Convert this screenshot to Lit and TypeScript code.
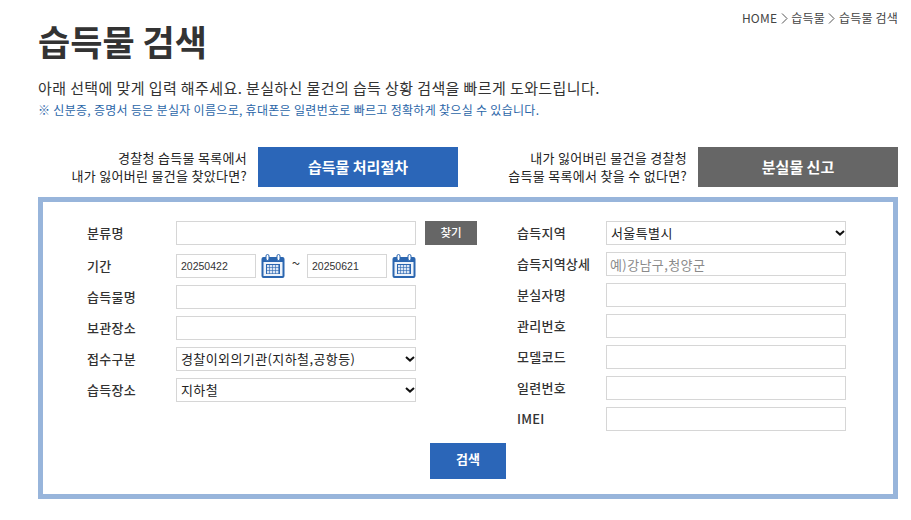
import { LitElement, html, css, svg } from "lit";
import { customElement } from "lit/decorators.js";

const chevron = html`<svg class="chev" viewBox="0 0 7 11" width="7" height="11"><path d="M1 .5 6 5.5 1 10.5" fill="none" stroke="#555" stroke-width="1"/></svg>`;

const calendar = html`<svg class="cal" viewBox="0 0 24 24" width="24" height="24">
  <path d="M2.5 3h19a2 2 0 0 1 2 2v17a2 2 0 0 1-2 2h-19a2 2 0 0 1-2-2V5a2 2 0 0 1 2-2z" fill="#2b66b0"/>
  <rect x="2.5" y="8" width="19" height="14" fill="#eef3fa"/>
  <rect x="5" y="0.5" width="3" height="6" rx="1.5" fill="#fff" stroke="#2b66b0"/>
  <rect x="16" y="0.5" width="3" height="6" rx="1.5" fill="#fff" stroke="#2b66b0"/>
  <rect x="5" y="10" width="14" height="10" fill="#2b66b0"/>
  ${[[6,11],[9,11],[12,11],[15,11],[6,14],[9,14],[12,14],[15,14],[6,17],[9,17],[12,17],[15,17]].map(([x,y]) => svg`<rect x="${x}" y="${y}" width="2.4" height="2.4" fill="#dbe6f5"/>`)}
</svg>`;

@customElement("app-root")
export class AppRoot extends LitElement {
  static styles = css`
    :host {
      display: block;
      box-sizing: border-box;
      width: 911px;
      height: 520px;
      padding: 10px 13px 0 38px;
      background: #fff;
      overflow: hidden;
      font-family: "Noto Sans CJK KR", "Noto Sans", sans-serif;
      color: #333;
    }
    .crumb {
      display: flex;
      justify-content: flex-end;
      align-items: center;
      gap: 3.5px;
      height: 16px;
      font-size: 12px;
      letter-spacing: 0.2px;
      color: #444;
      line-height: 16px;
    }
    .chev { display: block; }
    h1 {
      margin: -5px 0 0;
      font-size: 35px;
      font-weight: 700;
      line-height: 40px;
      height: 40px;
      color: #333;
    }
    .lead {
      margin: 17px 0 0;
      font-size: 15px;
      letter-spacing: 0.4px;
      line-height: 20px;
      color: #333;
    }
    .note {
      margin: 4px 0 0;
      font-size: 12px;
      letter-spacing: 0.3px;
      line-height: 16px;
      color: #2b66a8;
    }
    .links {
      display: flex;
      margin-top: 29px;
      height: 40px;
    }
    .link {
      display: flex;
      align-items: center;
      gap: 11px;
      width: 420px;
    }
    .link + .link { margin-left: 20px; }
    .link p {
      flex: 1;
      margin: 0;
      text-align: right;
      font-size: 13px;
      letter-spacing: 0.3px;
      line-height: 18px;
      color: #222;
    }
    .link a {
      box-sizing: border-box;
      display: flex;
      align-items: center;
      justify-content: center;
      width: 200px;
      height: 40px;
      padding-bottom: 2px;
      color: #fff;
      font-size: 15px;
      font-weight: 700;
    }
    .blue { background: #2b66b8; }
    .gray { background: #666; }
    .panel {
      box-sizing: border-box;
      height: 302px;
      width: 860px;
      margin-top: 10px;
      border: 5px solid #98b5db;
      padding: 19px 44px 0;
    }
    .cols { display: flex; gap: 40px; }
    .col { display: flex; flex-direction: column; }
    .col.left { width: 390px; }
    .row {
      display: flex;
      align-items: center;
      height: 24px;
      margin-bottom: 7px;
    }
    .row.first-left { margin-bottom: 9px; }
    .row label {
      width: 89px;
      flex: none;
      font-size: 13px;
      letter-spacing: 0.25px;
      font-weight: 500;
      color: #333;
      white-space: nowrap;
      margin-top: -2px;
    }
    .field {
      box-sizing: border-box;
      width: 240px;
      height: 24px;
      border: 1px solid #d6d6d6;
      background: #fff;
      padding: 0 3px;
      font: 13px "Noto Sans CJK KR", sans-serif;
      letter-spacing: 0.4px;
      color: #333;
      outline: none;
      border-radius: 0;
    }
    .field::placeholder { color: #8a8a8a; }
    select.field {
      appearance: none;
      -webkit-appearance: none;
      padding: 0 14px 2px 4px;
      color: #222;
      background: #fff url("data:image/svg+xml,%3Csvg xmlns='http://www.w3.org/2000/svg' width='10' height='6' viewBox='0 0 10 6'%3E%3Cpath d='M1 1l4 3.6L9 1' fill='none' stroke='%23111' stroke-width='2'/%3E%3C/svg%3E") no-repeat right 0.5px center;
    }
    .field.date {
      width: 80px;
      padding: 0 4px;
      letter-spacing: 0;
      font-size: 10.5px;
      font-family: "Liberation Sans", sans-serif;
    }
    .cal { display: block; margin-left: 5px; flex: none; }
    .tilde { width: 22px; text-align: center; font-size: 15px; line-height: 16px; margin-top: -6px; flex: none; }
    .find {
      box-sizing: border-box;
      display: flex;
      align-items: center;
      justify-content: center;
      margin-left: 9px;
      width: 52px;
      height: 24px;
      padding-bottom: 2px;
      background: #666;
      color: #fff;
      font-size: 11.5px;
      font-weight: 500;
    }
    .submit {
      box-sizing: border-box;
      display: flex;
      align-items: center;
      justify-content: center;
      width: 76px;
      height: 36px;
      margin: 5px auto 0;
      padding-bottom: 5px;
      background: #2b66b8;
      color: #fff;
      font-size: 13px;
      font-weight: 700;
    }
  `;

  text(label: string, placeholder = "") {
    return html`<div class="row"><label>${label}</label><input class="field" placeholder=${placeholder} /></div>`;
  }

  render() {
    return html`
      <div class="crumb">HOME ${chevron} 습득물 ${chevron} 습득물 검색</div>
      <h1>습득물 검색</h1>
      <p class="lead">아래 선택에 맞게 입력 해주세요. 분실하신 물건의 습득 상황 검색을 빠르게 도와드립니다.</p>
      <p class="note">※ 신분증, 증명서 등은 분실자 이름으로, 휴대폰은 일련번호로 빠르고 정확하게 찾으실 수 있습니다.</p>
      <div class="links">
        <div class="link">
          <p>경찰청 습득물 목록에서<br />내가 잃어버린 물건을 찾았다면?</p>
          <a class="blue">습득물 처리절차</a>
        </div>
        <div class="link">
          <p>내가 잃어버린 물건을 경찰청<br />습득물 목록에서 찾을 수 없다면?</p>
          <a class="gray">분실물 신고</a>
        </div>
      </div>
      <div class="panel">
        <div class="cols">
          <div class="col left">
            <div class="row first-left">
              <label>분류명</label><input class="field" /><span class="find">찾기</span>
            </div>
            <div class="row">
              <label>기간</label>
              <input class="field date" .value=${"20250422"} />${calendar}
              <span class="tilde">~</span>
              <input class="field date" .value=${"20250621"} />${calendar}
            </div>
            ${this.text("습득물명")}
            ${this.text("보관장소")}
            <div class="row">
              <label>접수구분</label>
              <select class="field"><option>경찰이외의기관(지하철,공항등)</option></select>
            </div>
            <div class="row">
              <label>습득장소</label>
              <select class="field"><option>지하철</option></select>
            </div>
          </div>
          <div class="col">
            <div class="row">
              <label>습득지역</label>
              <select class="field"><option>서울특별시</option></select>
            </div>
            ${this.text("습득지역상세", "예)강남구,청양군")}
            ${this.text("분실자명")}
            ${this.text("관리번호")}
            ${this.text("모델코드")}
            ${this.text("일련번호")}
            ${this.text("IMEI")}
          </div>
        </div>
        <a class="submit">검색</a>
      </div>
    `;
  }
}
